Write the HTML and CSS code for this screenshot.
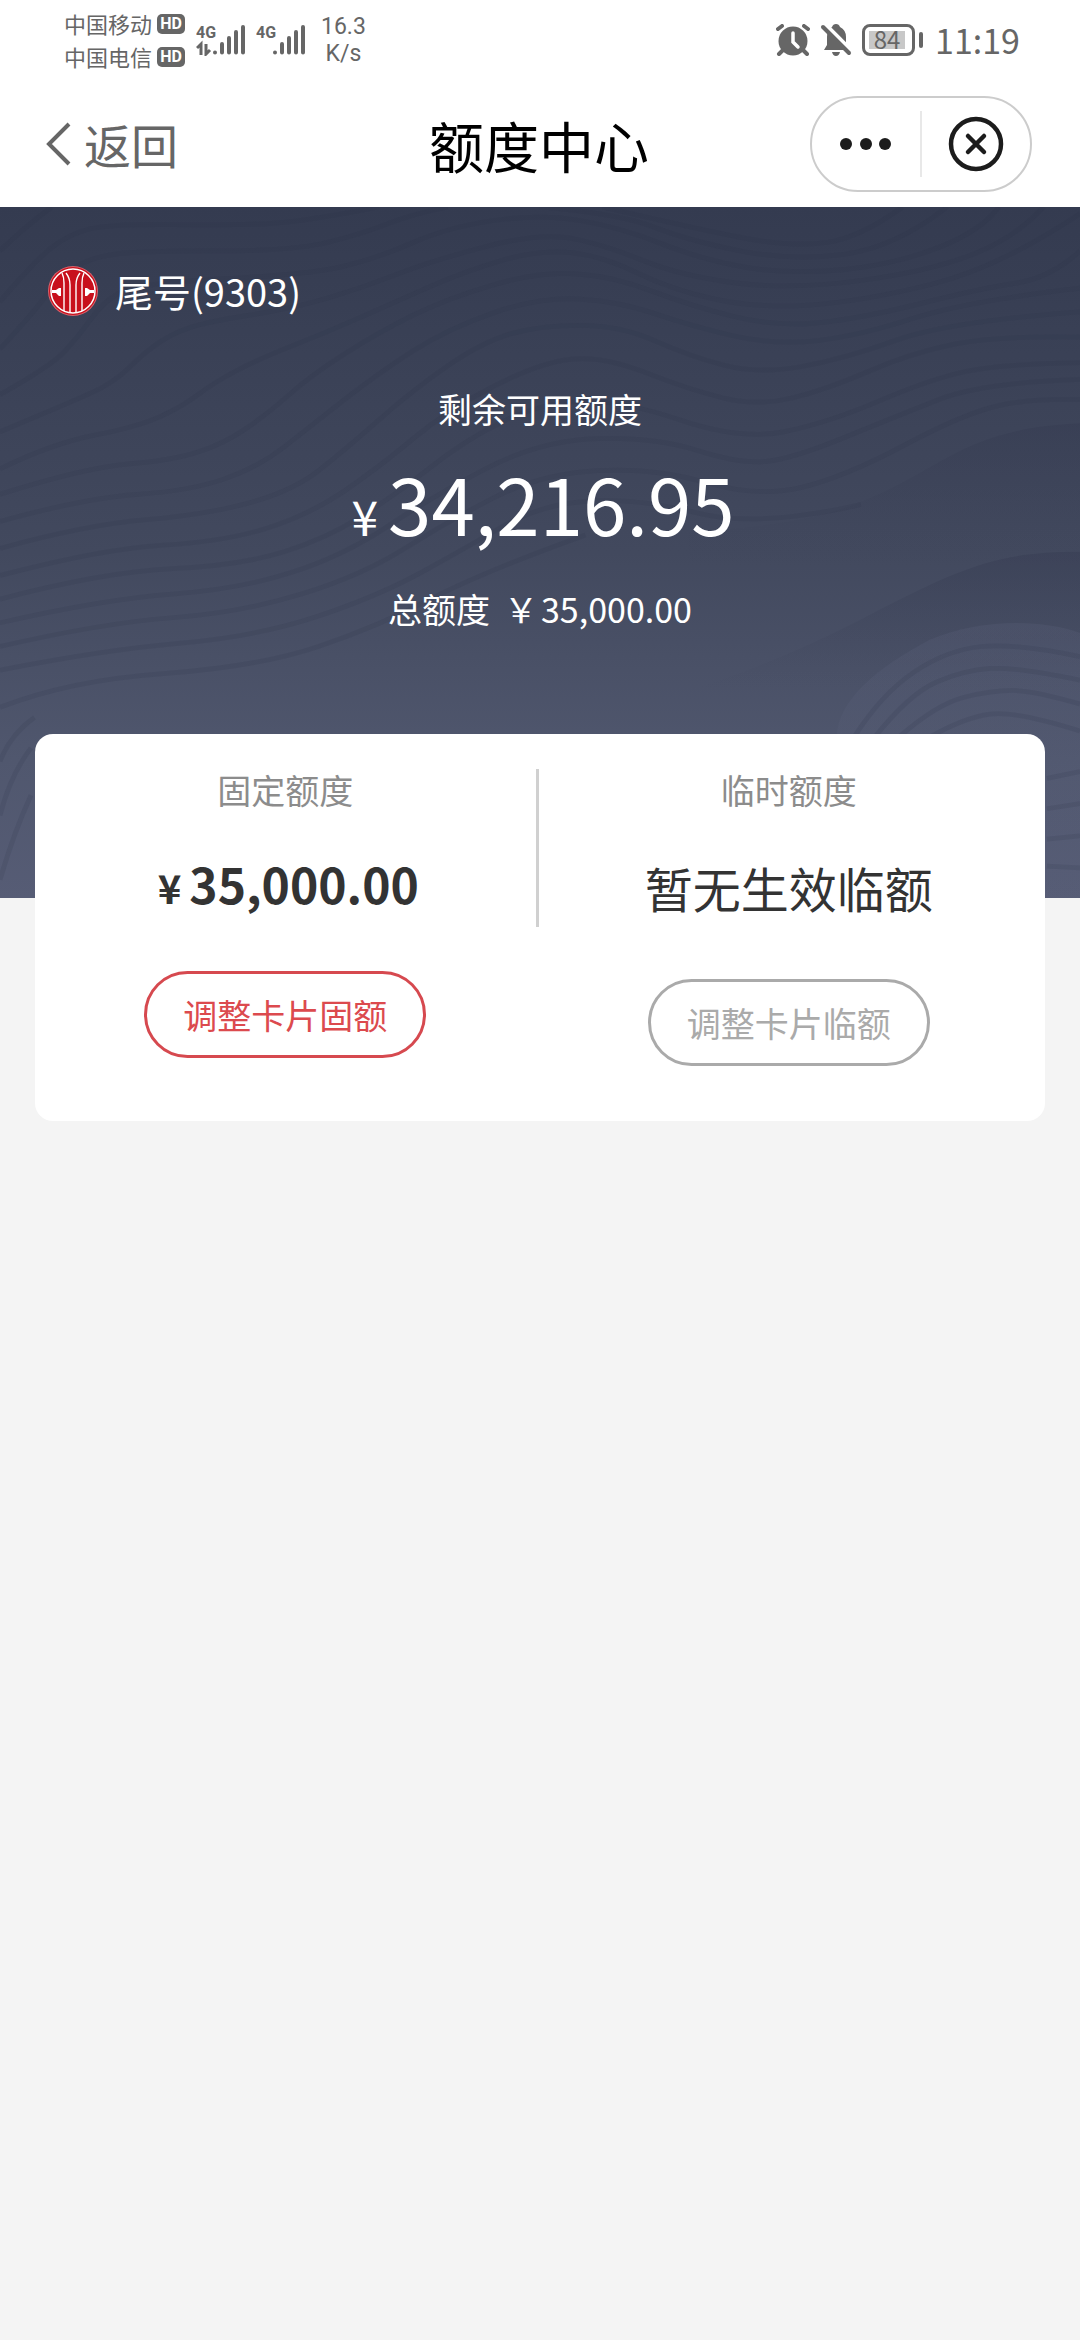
FILE: index.html
```html
<!DOCTYPE html>
<html lang="zh-CN">
<head>
<meta charset="utf-8">
<meta name="viewport" content="width=device-width, initial-scale=1">
<title>额度中心</title>
<link rel="stylesheet" href="styles.css">
<script src="waves.js" defer></script>
</head>
<body>
<header class="top">
  <div class="status">
    <div class="carriers">
      <div class="carrier">中国移动<span class="hd">HD</span></div>
      <div class="carrier">中国电信<span class="hd">HD</span></div>
    </div>
    <svg class="signal" width="50" height="32" viewBox="0 0 50 32" aria-hidden="true">
      <text class="net" x="0" y="14">4G</text>
      <path d="M1 24L5 20V31M10 20V30L14 26" fill="none" stroke="#666" stroke-width="3"/>
      <g stroke="#666" stroke-width="4" stroke-linecap="round"><path d="M19 28.500V28.600M26 20V28.500M33 14V28.500M40 8V28.500M47 3V28.500"/></g>
    </svg>
    <svg class="signal second" width="50" height="32" viewBox="0 0 50 32" aria-hidden="true">
      <text class="net" x="0" y="14">4G</text>
      <g stroke="#666" stroke-width="4" stroke-linecap="round"><path d="M19 28.500V28.600M26 20V28.500M33 14V28.500M40 8V28.500M47 3V28.500"/></g>
    </svg>
    <div class="speed"><span>16.3</span><span>K/s</span></div>
    <div class="status-right">
      <svg width="34" height="32" viewBox="0 0 34 32" aria-hidden="true">
        <circle cx="17" cy="17" r="14.500" fill="#666"/>
        <path d="M2 5L6 2M32 5L28 2M7 26L3 30M27 26L31 30" stroke="#666" stroke-width="4" stroke-linecap="round"/>
        <path d="M17 9V18L22 23" fill="none" stroke="#fff" stroke-width="3.500" stroke-linecap="round"/>
      </svg>
      <svg width="32" height="32" viewBox="0 0 32 32" aria-hidden="true">
        <path d="M12 3Q13 0 16 0T20 3Q26 6 26 13V19L29 26H4L7 21V13Q7 6 12 3ZM12 28H20Q19 32 16 32T12 28Z" fill="#666"/>
        <path d="M4 -1L34 29" stroke="#fff" stroke-width="4"/>
        <path d="M3 3L29 29" stroke="#666" stroke-width="4" stroke-linecap="round"/>
      </svg>
      <div class="battery"><span class="level">84</span></div>
      <time class="clock">11:19</time>
    </div>
  </div>
  <nav class="nav">
    <a class="back" href="#">
      <svg width="26" height="44" viewBox="0 0 26 44" aria-hidden="true"><path d="M23 2L3 22L23 42" fill="none" stroke="#666" stroke-width="4"/></svg>
      返回
    </a>
    <h1 class="title">额度中心</h1>
    <div class="capsule">
      <button class="cap-btn" type="button" aria-label="更多">
        <svg width="52" height="12" viewBox="0 0 52 12"><g fill="#1c1c1c"><circle cx="6" cy="6" r="6"/><circle cx="26" cy="6" r="6"/><circle cx="45" cy="6" r="6"/></g></svg>
      </button>
      <span class="cap-line"></span>
      <button class="cap-btn" type="button" aria-label="关闭">
        <svg width="56" height="56" viewBox="0 0 56 56"><g fill="none" stroke="#1c1c1c" stroke-width="4.500" stroke-linecap="round"><circle cx="28" cy="28" r="25"/><path d="M20 20L36 36M36 20L20 36"/></g></svg>
      </button>
    </div>
  </nav>
</header>
<main>
  <section class="hero">
    <svg class="waves" viewBox="0 0 3136 2044" preserveAspectRatio="none" aria-hidden="true">
      <defs>
        <linearGradient id="ridge" x1="0" y1="0" x2="0" y2="1"><stop offset="0" stop-color="#343a50" stop-opacity=".4"/><stop offset=".4" stop-color="#3c4258" stop-opacity="0"/></linearGradient>
        <linearGradient id="knoll" x1="0" y1="0" x2="0" y2="1"><stop offset="0" stop-color="#5c627c" stop-opacity=".25"/><stop offset="1" stop-color="#5c627c" stop-opacity=".1"/></linearGradient>
      </defs>
      <path fill="url(#ridge)" d="M2000 960C2350 940 2480 900 2700 770C2850 680 2950 650 3136 640V1700H2000Z"/>
      <path fill="url(#ridge)" d="M1500 1568C2000 1450 2250 1350 2500 1220C2800 1060 2900 1020 3136 1020V2044H1500Z"/>
      <path fill="url(#knoll)" d="M2430 1568C2430 1460 2550 1360 2700 1280C2850 1215 3030 1220 3136 1260V2044H2430Z"/>
      <path id="contours" class="contours"/>
    </svg>
    <div class="bank">
      <svg class="logo" width="50" height="50" viewBox="0 0 50 50" role="img" aria-label="银行标志">
        <circle cx="25" cy="25" r="25" fill="#d9626c"/>
        <circle cx="25" cy="25" r="24" fill="#c8101c"/>
        <circle cx="25" cy="25" r="22" fill="none" stroke="#fff" stroke-width="1.500"/>
        <path d="M14 7Q16 11 16 17V45M18 7Q22 12 22 19V46M36 7Q34 11 34 17V45M32 7Q28 12 28 19V46" fill="none" stroke="#fff" stroke-width="1.400"/>
        <path d="M4 24H8L11 22H13V30H11L8 27H4ZM46 24H42L39 22H37V30H39L42 27H46Z" fill="#fff"/>
      </svg>
      <span>尾号(9303)</span>
    </div>
    <p class="caption">剩余可用额度</p>
    <p class="available"><span class="yen">¥</span>34,216.95</p>
    <p class="total"><span>总额度</span><span>￥</span><span>35,000.00</span></p>
  </section>
  <section class="card">
    <div class="quota">
      <h2 class="label">固定额度</h2>
      <p class="amount"><span class="unit">¥</span>35,000.00</p>
      <button class="pill pill-red" type="button">调整卡片固额</button>
    </div>
    <div class="split"></div>
    <div class="quota">
      <h2 class="label">临时额度</h2>
      <p class="none">暂无生效临额</p>
      <button class="pill" type="button" disabled>调整卡片临额</button>
    </div>
  </section>
</main>
</body>
</html>
```
FILE: waves.js
```js
// Contour lines of the hero background, as x,y pairs in the svg's own units.
const contours = [
  [0,130, 70,60, 150,0],
  [0,280, 100,160, 200,80, 320,50, 700,55, 900,40, 1100,0],
  [0,420, 100,310, 170,210, 260,150, 400,130, 850,130, 1050,80, 1200,20, 1300,0],
  [0,555, 150,470, 230,380, 300,280, 400,225, 900,200, 1100,150, 1300,60, 1568,20, 1800,60, 2050,160, 2300,200, 2600,170, 2850,70, 2900,0],
  [0,665, 200,580, 330,520, 420,430, 500,375, 600,340, 850,300, 1050,240, 1250,160, 1568,75, 1750,110, 1980,205, 2300,245, 2700,190, 2950,90, 3030,0],
  [0,775, 150,700, 400,650, 530,590, 620,520, 750,450, 950,370, 1150,280, 1350,190, 1568,125, 1750,145, 1950,245, 2200,300, 2500,280, 2900,180, 3136,20],
  [0,850, 250,770, 500,750, 650,700, 780,610, 900,500, 1100,370, 1300,270, 1568,190, 1780,205, 2000,290, 2250,355, 2500,330, 2850,240, 3050,210, 3136,130],
  [0,930, 250,860, 550,840, 750,770, 900,650, 1100,490, 1300,360, 1568,265, 1800,280, 2000,350, 2250,410, 2500,380, 2800,280, 3136,240],
  [0,1010, 250,940, 600,910, 850,840, 1000,720, 1200,540, 1400,400, 1568,350, 1800,350, 2000,440, 2200,495, 2450,450, 2750,340, 3136,310],
  [0,1090, 300,1010, 650,990, 900,910, 1100,770, 1300,600, 1568,460, 1750,440, 2000,540, 2200,590, 2400,540, 2650,430, 2900,380, 3136,385],
  [0,1160, 300,1080, 700,1060, 950,980, 1150,850, 1350,690, 1568,580, 1800,570, 2150,690, 2400,640, 2700,510, 2900,465, 3136,460],
  [0,1230, 300,1160, 700,1130, 1000,1030, 1250,860, 1568,690, 1900,680, 2150,760, 2300,745, 2600,620, 2850,520, 3136,510],
  [0,1300, 300,1230, 700,1200, 1050,1090, 1300,930, 1568,790, 1900,770, 2200,860, 2450,800, 2800,610, 3000,565, 3136,570],
  [0,1370, 300,1310, 750,1270, 1100,1150, 1350,1010, 1568,880, 1850,860, 2200,950, 2500,880],
  [0,1480, 200,1400, 750,1360, 1100,1240, 1400,1080, 1700,970],
  [0,1640, 30,1560, 100,1510],
  [0,1800, 30,1680, 90,1600],
  [0,1990, 40,1850, 90,1740],
  [1568,0, 1800,20, 2000,100, 2300,160, 2600,120, 2750,0],
  [1750,0, 2000,60, 2300,120, 2500,90, 2620,0],
  [2480,1568, 2560,1440, 2750,1310, 2950,1290, 3136,1330],
  [2540,1568, 2640,1440, 2800,1370, 2950,1360, 3136,1400],
  [2610,1568, 2720,1470, 2880,1430, 3000,1430, 3136,1470],
  [2700,1568, 2800,1510, 2950,1490, 3136,1550],
  [3040,1690, 3136,1670],
  [3040,1780, 3136,1765],
  [3040,1870, 3136,1860],
  [3040,1950, 3136,1955]
];

// Quadratic curves through the midpoints keep each contour smooth.
function smooth(p) {
  let d = `M${p[0]} ${p[1]}`;
  for (let i = 2; i < p.length - 2; i += 2) {
    const last = i === p.length - 4;
    const x = last ? p[i + 2] : (p[i] + p[i + 2]) / 2;
    const y = last ? p[i + 3] : (p[i + 1] + p[i + 3]) / 2;
    d += `Q${p[i]} ${p[i + 1]} ${x} ${y}`;
  }
  if (p.length === 4) d += `L${p[2]} ${p[3]}`;
  return d;
}

document.getElementById("contours").setAttribute("d", contours.map(smooth).join(""));
```
FILE: styles.css
```css
* { box-sizing: border-box; }
body {
  margin: 0;
  background: #f4f4f4;
  color: #333;
  font-family: "Noto Sans CJK SC", "Noto Sans", sans-serif;
}
h1, h2, p { margin: 0; font-weight: 400; }
svg { display: block; flex: none; }
button { font-family: inherit; background: none; cursor: pointer; }

.top { background: #fff; }
.status {
  display: flex;
  align-items: center;
  height: 80px;
  padding: 0 60px 0 64px;
  color: #666;
}
.carrier {
  display: flex;
  align-items: center;
  gap: 5px;
  font-size: 22px;
  line-height: 33px;
}
.hd {
  width: 28px;
  border-radius: 5px;
  background: #666;
  color: #fff;
  font: 700 16px/20px Roboto, sans-serif;
  text-align: center;
}
.signal { margin-left: 11px; }
.second { margin-left: 10px; }
.net { font: 700 16px "Liberation Sans Narrow", Roboto, sans-serif; fill: #666; }
.speed {
  display: flex;
  flex-direction: column;
  margin-left: 15px;
  font: 400 23px/27px Roboto, sans-serif;
  text-align: center;
}
.status-right {
  display: flex;
  align-items: center;
  gap: 10px;
  margin-left: auto;
}
.battery {
  position: relative;
  width: 53px;
  height: 32px;
  margin-right: 10px;
  padding: 4px;
  border: 3px solid #666;
  border-radius: 8px;
}
.battery::after {
  content: "";
  position: absolute;
  top: 5px;
  right: -11px;
  width: 4px;
  height: 16px;
  border-radius: 2px;
  background: #666;
}
.level {
  display: block;
  height: 18px;
  width: 36px;
  background: #c8c8c8;
  font-size: 24px;
  line-height: 16px;
  text-align: center;
}
.clock { font-size: 34px; line-height: 40px; }

.nav {
  display: grid;
  grid-template-columns: 1fr auto 1fr;
  align-items: center;
  height: 127px;
  padding: 0 48px 0 46px;
}
.back {
  display: flex;
  align-items: center;
  gap: 12px;
  color: #666;
  font-size: 47px;
  line-height: 56px;
  text-decoration: none;
}
.title { color: #000; font-size: 55px; line-height: 64px; }
.capsule {
  display: flex;
  align-items: center;
  justify-self: end;
  width: 222px;
  height: 96px;
  border: 2px solid #ccc;
  border-radius: 48px;
}
.cap-btn {
  display: flex;
  flex: 1;
  align-items: center;
  justify-content: center;
  height: 100%;
  padding: 0;
  border: 0;
}
.cap-line { width: 2px; height: 66px; background: #e8e8e8; }

.hero {
  position: relative;
  padding: 56px 48px 266px;
  background: linear-gradient(#343b50, #42495e 50%, #50576e 80%, #565c75);
  color: #fff;
  text-align: center;
}
.waves { position: absolute; inset: 0; width: 100%; height: 100%; }
.contours { fill: none; stroke: #2b3145; stroke-opacity: .14; stroke-width: 14; }
.bank, .caption, .available, .total { position: relative; }
.bank {
  display: flex;
  align-items: center;
  gap: 17px;
  font-size: 38px;
  line-height: 56px;
}
.caption { margin-top: 67px; font-size: 34px; line-height: 46px; }
.available {
  display: flex;
  justify-content: center;
  align-items: baseline;
  gap: 10px;
  margin-top: 22px;
  padding-left: 6px;
  font-size: 78px;
  line-height: 96px;
}
.yen { font-size: 48px; line-height: 48px; }
.total {
  display: flex;
  justify-content: center;
  margin-top: 36px;
  font-size: 34px;
  line-height: 46px;
}
.total span + span { margin-left: 14px; }
.total span:last-child { margin-left: 3px; }

.card {
  position: relative;
  display: flex;
  margin: -164px 35px 0;
  padding: 0 6px 55px 0;
  border-radius: 18px;
  background: #fff;
}
.quota {
  display: flex;
  flex: 1;
  flex-direction: column;
  align-items: center;
  padding-top: 33px;
}
.split { width: 3px; height: 158px; margin-top: 35px; background: #d0d0d0; }
.label { color: #8c8c8c; font-size: 34px; line-height: 46px; }
.amount, .none { margin: 35px 0 53px; font-size: 48px; line-height: 70px; }
.amount { display: flex; align-items: baseline; gap: 8px; padding-left: 6px; font-weight: 700; }
.unit { font-size: 40px; line-height: 40px; }
.none { line-height: 78px; }
.pill {
  width: 282px;
  height: 87px;
  padding: 0;
  border: 3px solid #aaa;
  border-radius: 44px;
  color: #aaa;
  font-size: 34px;
  line-height: 46px;
}
.pill-red { border-color: #d6494f; color: #dc4a4e; }
```
